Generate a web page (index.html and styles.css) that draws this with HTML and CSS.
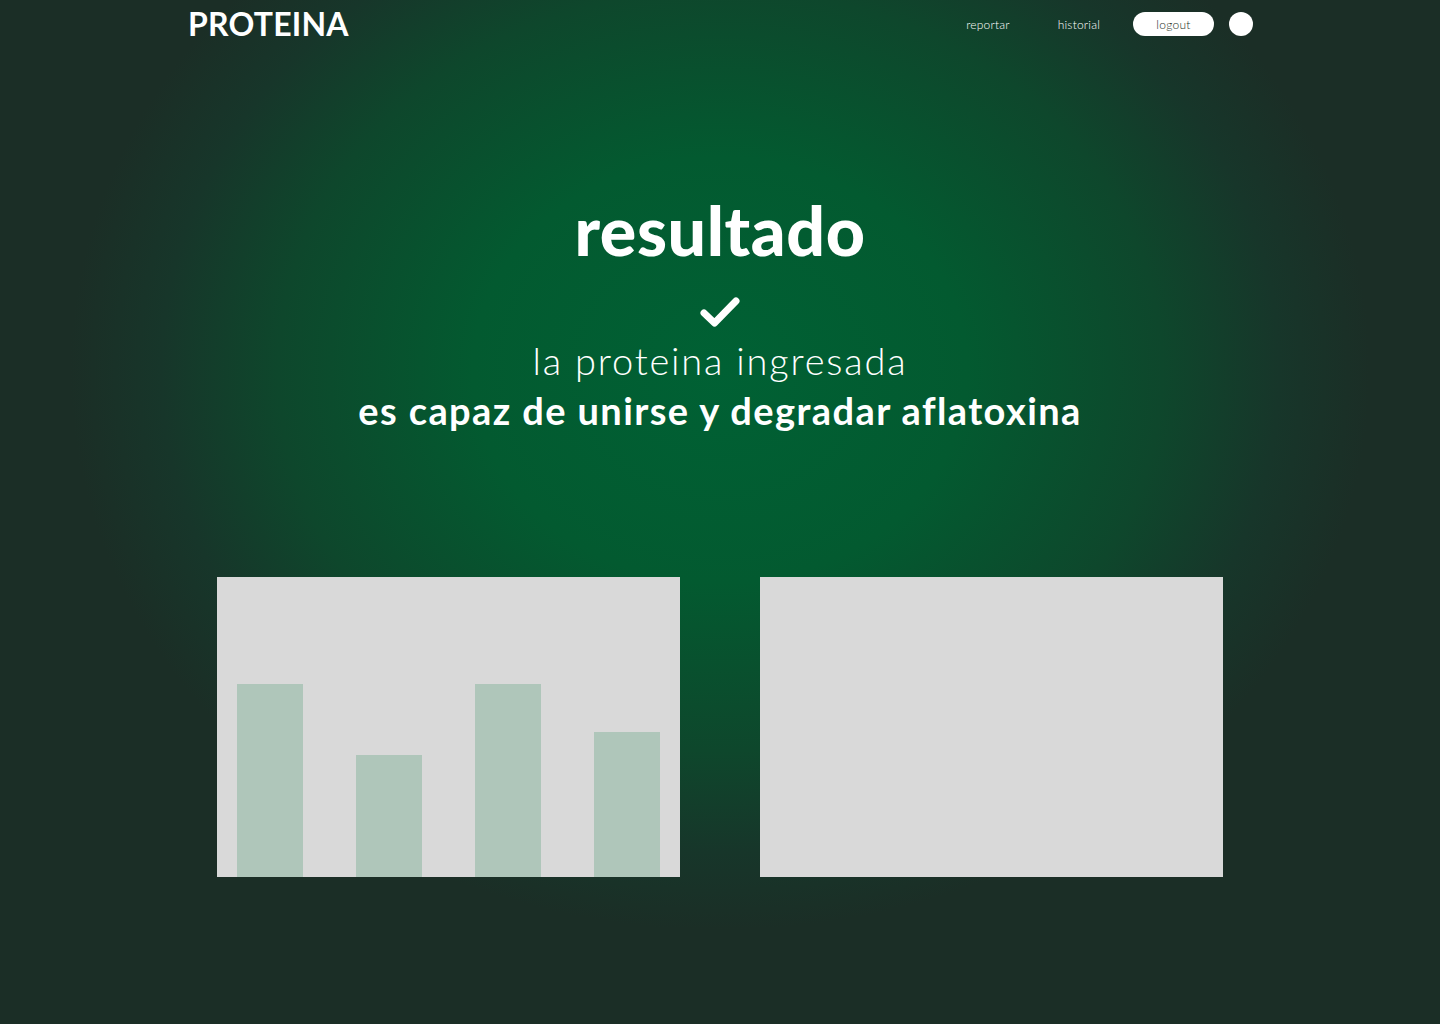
FILE: index.html
```html
<!DOCTYPE html>
<html lang="es">
<head>
<meta charset="utf-8">
<title>Proteina - resultado</title>
<link rel="stylesheet" href="styles.css">
</head>
<body>
<div class="page">
  <header class="topbar">
    <div class="logo">PROTEINA</div>
    <nav class="nav">
      <a class="nav-link" href="#">reportar</a>
      <a class="nav-link" href="#">historial</a>
      <a class="btn-logout" href="#">logout</a>
      <span class="avatar"></span>
    </nav>
  </header>

  <main class="hero">
    <h1 class="title">resultado</h1>
    <svg class="check" width="42" height="32" viewBox="0 0 42 32" aria-hidden="true">
      <path d="M5 17 L15.5 27 L37 5" fill="none" stroke="#ffffff" stroke-width="7" stroke-linecap="round" stroke-linejoin="round"/>
    </svg>
    <p class="line-light">la proteina ingresada</p>
    <p class="line-bold">es capaz de unirse y degradar aflatoxina</p>
  </main>

  <section class="cards">
    <div class="card chart">
      <div class="bar" style="height:193px"></div>
      <div class="bar" style="height:122px"></div>
      <div class="bar" style="height:193px"></div>
      <div class="bar" style="height:145px"></div>
    </div>
    <div class="card"></div>
  </section>
</div>
</body>
</html>
```

FILE: styles.css
```css
* { box-sizing: border-box; }
html, body { margin: 0; padding: 0; }
body {
  width: 1440px;
  height: 1024px;
  overflow: hidden;
  font-family: "Lato", "Inter", sans-serif;
  color: #ffffff;
  background-color: #1b2e26;
  background-image: radial-gradient(ellipse 650px 560px at 720px 370px, #006134 0%, #035a30 38%, #0e472c 68%, #17362a 86%, #1b2e26 100%);
}
.page {
  width: 1440px;
  height: 1024px;
}
.topbar {
  height: 48px;
  padding: 0 187px 0 188px;
  display: flex;
  align-items: center;
  justify-content: space-between;
}
.logo {
  font-size: 32px;
  font-weight: 700;
  letter-spacing: 0.2px;
  line-height: 1;
}
.nav {
  display: flex;
  align-items: center;
}
.nav-link {
  color: #ffffff;
  text-decoration: none;
  font-size: 12px;
  font-weight: 300;
  letter-spacing: 0.2px;
  margin-right: 48px;
}
.nav-link + .nav-link { margin-right: 33px; }
.btn-logout {
  width: 81px;
  height: 24px;
  border-radius: 12px;
  background: #ffffff;
  color: #1b2e26;
  font-size: 12px;
  font-weight: 300;
  letter-spacing: 0.3px;
  text-decoration: none;
  display: flex;
  align-items: center;
  justify-content: center;
  margin-right: 15px;
}
.avatar {
  width: 24px;
  height: 24px;
  border-radius: 50%;
  background: #ffffff;
}
.hero {
  display: flex;
  flex-direction: column;
  align-items: center;
  padding-top: 144px;
}
.title {
  margin: 0;
  font-size: 68px;
  font-weight: 900;
  line-height: 76px;
  letter-spacing: 0.6px;
}
.check {
  margin-top: 28px;
  display: block;
}
.line-light {
  margin: 9px 0 0;
  font-size: 38px;
  font-weight: 300;
  line-height: 46px;
  letter-spacing: 1.8px;
}
.line-bold {
  margin: 4px 0 0;
  font-size: 38px;
  font-weight: 700;
  line-height: 46px;
  letter-spacing: 1.4px;
}
.cards {
  margin-top: 144px;
  display: flex;
  justify-content: center;
  gap: 80px;
}
.card {
  width: 463px;
  height: 300px;
  background: #d9d9d9;
}
.chart {
  display: flex;
  align-items: flex-end;
  justify-content: space-between;
  padding: 0 20px;
}
.bar {
  width: 66px;
  background: #afc6ba;
}
```
